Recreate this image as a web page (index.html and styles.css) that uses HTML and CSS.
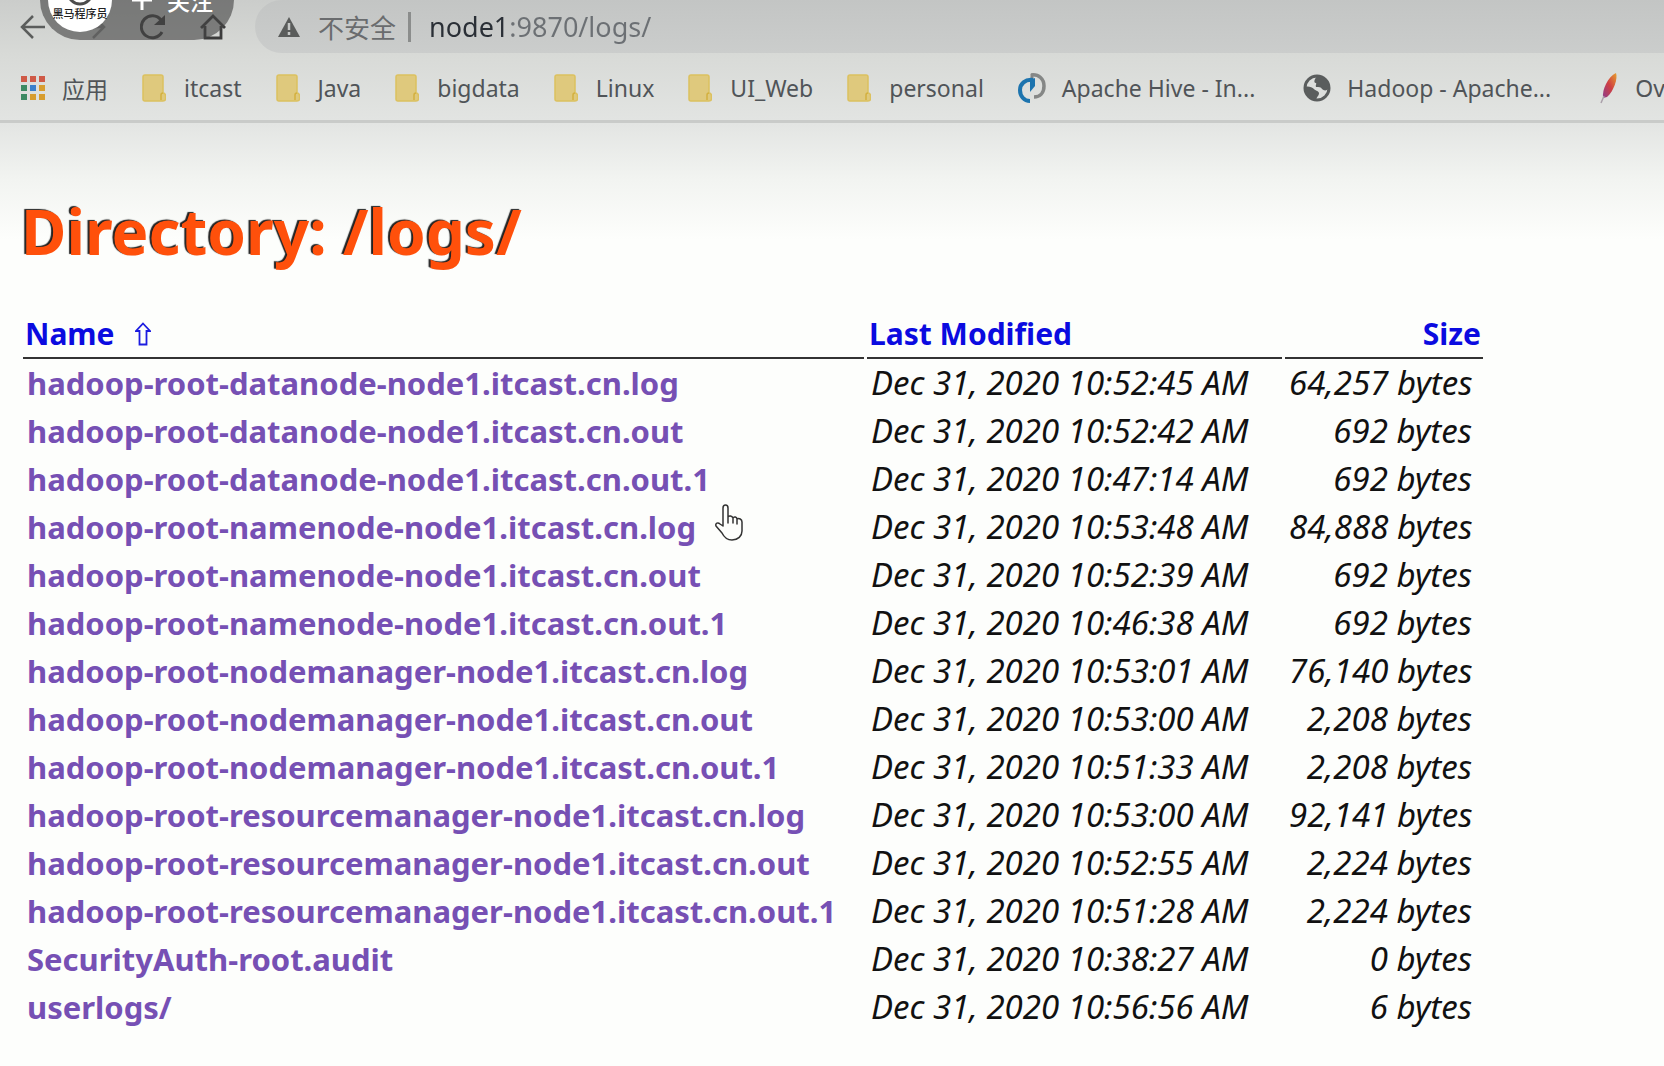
FILE: index.html
```html
<!DOCTYPE html>
<html lang="zh-CN">
<head>
<meta charset="utf-8">
<title>Directory: /logs/</title>
<link rel="stylesheet" href="styles.css">
</head>
<body>
<svg class="defs" width="0" height="0" aria-hidden="true">
  <symbol id="folder" viewBox="0 0 24 28">
    <path d="M3 1h16a2 2 0 0 1 2 2v16c2 0 2.500 1 2.500 3v3c0 1.500-1 2-2.500 2H3a2 2 0 0 1-2-2V3a2 2 0 0 1 2-2z" fill="#dfc97d" stroke="#dcc15f" stroke-width="1.500"/>
    <path d="M19 26v-5c0-1.500 1-2 2-2" fill="none" stroke="#d3b03f" stroke-width="1.500"/>
  </symbol>
</svg>

<header class="browser">
  <div class="toolbar">
    <nav class="controls" aria-label="Navigation">
      <button class="control" type="button" aria-label="Back">
        <svg width="26" height="26" viewBox="0 0 26 26"><path d="M25 13H3M13 2 2 13l11 11" fill="none" stroke="#5b5d5c" stroke-width="2.500"/></svg>
      </button>
      <button class="control" type="button" aria-label="Forward">
        <svg width="26" height="26" viewBox="0 0 26 26"><path d="M1 13h22M13 2l11 11-11 11" fill="none" stroke="#8b8d8c" stroke-width="2.500"/></svg>
      </button>
      <button class="control" type="button" aria-label="Reload">
        <svg width="26" height="26" viewBox="0 0 26 26"><path d="M21 6A11 11 0 1 0 22 18" fill="none" stroke="#3c3c3c" stroke-width="3"/><path d="M25 1v10H14z" fill="#3c3c3c"/></svg>
      </button>
      <button class="control" type="button" aria-label="Home">
        <svg width="26" height="26" viewBox="0 0 26 26"><path d="M1 14 13 2l12 12M5 12v12h16V12" fill="none" stroke="#3c3c3c" stroke-width="2.800"/></svg>
      </button>
    </nav>
    <div class="address">
      <svg width="24" height="22" viewBox="0 0 24 22"><path d="M12 1 23 21H1z" fill="#5a5c5b"/><path d="M12 7v7M12 16v3" stroke="#c6c8c7" stroke-width="2.500"/></svg>
      <label class="security" for="url">不安全</label>
      <span class="divider"></span>
      <input class="url" id="url" type="text" value="node1:9870/logs/" spellcheck="false">
    </div>
  </div>

  <nav class="bookmarks" aria-label="Bookmarks">
    <a class="bookmark apps" href="#">
      <svg width="26" height="26" viewBox="0 0 26 26">
        <path d="M1 1h6v6H1zM10 1h6v6h-6zM19 1h6v6h-6z" fill="#cf5a47"/>
        <path d="M1 10h6v6H1zM1 19h6v6H1z" fill="#3d8a63"/>
        <path d="M10 10h6v6h-6z" fill="#3a7fcb"/>
        <path d="M19 10h6v6h-6zM10 19h6v6h-6zM19 19h6v6h-6z" fill="#d79d2f"/>
      </svg>应用</a>
    <a class="bookmark" href="#"><svg width="24" height="28"><use href="#folder"/></svg>itcast</a>
    <a class="bookmark" href="#"><svg width="24" height="28"><use href="#folder"/></svg>Java</a>
    <a class="bookmark" href="#"><svg width="24" height="28"><use href="#folder"/></svg>bigdata</a>
    <a class="bookmark" href="#"><svg width="24" height="28"><use href="#folder"/></svg>Linux</a>
    <a class="bookmark" href="#"><svg width="24" height="28"><use href="#folder"/></svg>UI_Web</a>
    <a class="bookmark" href="#"><svg width="24" height="28"><use href="#folder"/></svg>personal</a>
    <a class="bookmark site" href="#">
      <svg width="28" height="30" viewBox="0 0 28 30">
        <path d="M13 2c8-1 13 4 13 11s-4 11-10 11" fill="none" stroke="#858786" stroke-width="3.500"/>
        <path d="M14 1v8" stroke="#858786" stroke-width="3"/>
        <path d="M15 7C7 6 2 11 2 17s4 11 10 11" fill="none" stroke="#1d74ae" stroke-width="4"/>
        <path d="M17 5v8l-5 6V7z" fill="#1d74ae"/>
      </svg>Apache Hive - In...</a>
    <a class="bookmark site" href="#">
      <svg width="28" height="28" viewBox="0 0 28 28">
        <circle cx="14" cy="14" r="12" fill="#dcdedc" stroke="#5a5d5d" stroke-width="3"/>
        <path d="M14 2c5 0 9 3 11 7l1 5c-2 3-5 3-7 1-1-2-3-2-6-2-1-2 1-3 0-4-2 0-2-2-1-4zM2 13c3-1 7 0 9 2 1 2 4 1 5 4 0 3-2 3-3 7C6 26 2 20 2 13z" fill="#5a5d5d"/>
      </svg>Hadoop - Apache...</a>
    <a class="bookmark site" href="#">
      <svg width="20" height="32" viewBox="0 0 20 32">
        <defs><linearGradient id="plume" x1="1" y1="0" x2="0" y2="1"><stop offset="0" stop-color="#e6a02f"/><stop offset=".5" stop-color="#cf3f42"/><stop offset="1" stop-color="#8d3c8d"/></linearGradient></defs>
        <path d="M17 1c2 5-2 18-9 24l-4 1C3 17 9 5 17 1z" fill="url(#plume)"/>
        <path d="m5 24-3 7" stroke="#aaa0aa" stroke-width="1.500"/>
      </svg>Ov</a>
  </nav>
</header>

<aside class="follow">
  <span class="avatar">
    <svg width="28" height="28" viewBox="0 0 28 28"><circle cx="14" cy="14" r="12" fill="none" stroke="#4c4c4c" stroke-width="3"/></svg>
    <span class="channel">黑马程序员</span>
  </span>
  <button class="follow-button" type="button"><svg width="20" height="20" viewBox="0 0 20 20"><path d="M10 0v20M0 10h20" stroke="#fff" stroke-width="3"/></svg>关注</button>
</aside>

<main class="listing">
  <h1 class="title">Directory: /logs/</h1>
  <table class="files">
    <colgroup><col class="col-name"><col class="col-date"><col class="col-size"></colgroup>
    <thead>
      <tr>
        <th><a href="#">Name<svg class="sort" width="16" height="24" viewBox="0 0 16 24"><path d="M8 1.500 15 9h-3.500v13.500h-7V9H1z" fill="none" stroke="#1c1ce0" stroke-width="1.800"/></svg></a></th>
        <th><a href="#">Last Modified</a></th>
        <th class="size"><a href="#">Size</a></th>
      </tr>
    </thead>
    <tbody>
      <tr><td class="name"><a href="#">hadoop-root-datanode-node1.itcast.cn.log</a></td><td class="date">Dec 31, 2020 10:52:45 AM</td><td class="size">64,257 bytes</td></tr>
      <tr><td class="name"><a href="#">hadoop-root-datanode-node1.itcast.cn.out</a></td><td class="date">Dec 31, 2020 10:52:42 AM</td><td class="size">692 bytes</td></tr>
      <tr><td class="name"><a href="#">hadoop-root-datanode-node1.itcast.cn.out.1</a></td><td class="date">Dec 31, 2020 10:47:14 AM</td><td class="size">692 bytes</td></tr>
      <tr><td class="name"><a href="#">hadoop-root-namenode-node1.itcast.cn.log</a></td><td class="date">Dec 31, 2020 10:53:48 AM</td><td class="size">84,888 bytes</td></tr>
      <tr><td class="name"><a href="#">hadoop-root-namenode-node1.itcast.cn.out</a></td><td class="date">Dec 31, 2020 10:52:39 AM</td><td class="size">692 bytes</td></tr>
      <tr><td class="name"><a href="#">hadoop-root-namenode-node1.itcast.cn.out.1</a></td><td class="date">Dec 31, 2020 10:46:38 AM</td><td class="size">692 bytes</td></tr>
      <tr><td class="name"><a href="#">hadoop-root-nodemanager-node1.itcast.cn.log</a></td><td class="date">Dec 31, 2020 10:53:01 AM</td><td class="size">76,140 bytes</td></tr>
      <tr><td class="name"><a href="#">hadoop-root-nodemanager-node1.itcast.cn.out</a></td><td class="date">Dec 31, 2020 10:53:00 AM</td><td class="size">2,208 bytes</td></tr>
      <tr><td class="name"><a href="#">hadoop-root-nodemanager-node1.itcast.cn.out.1</a></td><td class="date">Dec 31, 2020 10:51:33 AM</td><td class="size">2,208 bytes</td></tr>
      <tr><td class="name"><a href="#">hadoop-root-resourcemanager-node1.itcast.cn.log</a></td><td class="date">Dec 31, 2020 10:53:00 AM</td><td class="size">92,141 bytes</td></tr>
      <tr><td class="name"><a href="#">hadoop-root-resourcemanager-node1.itcast.cn.out</a></td><td class="date">Dec 31, 2020 10:52:55 AM</td><td class="size">2,224 bytes</td></tr>
      <tr><td class="name"><a href="#">hadoop-root-resourcemanager-node1.itcast.cn.out.1</a></td><td class="date">Dec 31, 2020 10:51:28 AM</td><td class="size">2,224 bytes</td></tr>
      <tr><td class="name"><a href="#">SecurityAuth-root.audit</a></td><td class="date">Dec 31, 2020 10:38:27 AM</td><td class="size">0 bytes</td></tr>
      <tr><td class="name"><a href="#">userlogs/</a></td><td class="date">Dec 31, 2020 10:56:56 AM</td><td class="size">6 bytes</td></tr>
    </tbody>
  </table>
</main>

<svg class="pointer" width="28" height="37" viewBox="0 0 28 37" aria-hidden="true">
  <path d="M8 22V4c0-4 5-4 5 0v9c1-2 4-1 5 1 1-2 4-1 4 1 2-1 5 0 5 3v9c0 5-4 9-10 9-5 0-8-3-10-7L1 22c-1-3 2-4 4-2zM13 13v6M18 14v5M22 15v5" fill="#fdfefc" stroke="#333" stroke-width="1.500" stroke-linejoin="round" stroke-linecap="round"/>
</svg>
</body>
</html>
```
FILE: styles.css
```css
* {
  box-sizing: border-box;
}

body {
  margin: 0;
  overflow-x: hidden;
  background: #fdfefc linear-gradient(#cbcdcb 0, #d8dad7 55px, #e2e4e2 120px, #f2f4f1 180px, #fdfefc 240px) no-repeat;
  font-family: "Noto Sans", "Noto Sans CJK SC", sans-serif;
}

a {
  color: inherit;
  text-decoration: none;
}

button {
  padding: 0;
  border: 0;
  background: none;
  font: inherit;
}

svg {
  display: block;
  flex: none;
}

.defs {
  position: absolute;
}

/* Browser chrome */

.browser {
  border-bottom: 3px solid #c9cbc9;
}

.toolbar {
  display: flex;
  height: 53px;
  padding-left: 20px;
}

.controls {
  display: flex;
  flex: none;
  gap: 34px;
  width: 235px;
}

.control {
  display: flex;
  align-items: center;
}

.address {
  display: flex;
  flex: 1;
  align-items: center;
  padding-left: 22px;
  border-radius: 27px 0 0 27px;
  background: linear-gradient(#c3c5c4, #cbcdcc);
  font-size: 27px;
}

.security {
  margin-left: 17px;
  color: #6a6c6e;
  font-size: 26px;
}

.divider {
  width: 3px;
  height: 30px;
  margin: 0 18px 0 12px;
  background: #8b8d8c;
}

.url {
  flex: 1;
  min-width: 0;
  padding: 0;
  border: 0;
  outline: 0;
  /* the host name is darker than the port and path */
  background: linear-gradient(90deg, #2a2f36 3em, #6c7074 3em);
  background-clip: text;
  color: transparent;
  font: inherit;
}

.bookmarks {
  display: flex;
  align-items: center;
  gap: 34px;
  height: 67px;
  padding: 3px 0 0 20px;
  overflow: hidden;
  color: #505458;
  font-size: 23px;
  white-space: nowrap;
}

.bookmark {
  display: flex;
  flex: none;
  align-items: center;
  gap: 18px;
}

.apps,
.site {
  gap: 16px;
}

.site + .site {
  margin-left: 14px;
}

/* Video channel badge */

.follow {
  position: absolute;
  top: -40px;
  left: 40px;
  display: flex;
  align-items: center;
  gap: 20px;
  height: 80px;
  padding: 0 21px 0 8px;
  border-radius: 40px;
  background: rgba(70, 70, 70, .62);
}

.avatar {
  display: flex;
  flex-direction: column;
  align-items: center;
  justify-content: flex-end;
  width: 64px;
  height: 64px;
  padding-bottom: 10px;
  border-radius: 50%;
  background: #fff;
}

.channel {
  color: #222;
  font-size: 11px;
  font-weight: 500;
  line-height: 16px;
}

.follow-button {
  display: flex;
  align-items: center;
  gap: 15px;
  color: #fff;
  font-size: 23px;
  font-weight: 500;
}

/* Directory listing */

.listing {
  padding: 68px 20px 32px;
}

.title {
  margin: 0 0 40px 1px;
  color: #ff500b;
  font-size: 62px;
  line-height: 80px;
  text-shadow: -2px -1px 1px #222;
}

.files {
  table-layout: fixed;
  width: 1466px;
  border-spacing: 3px 0;
  font-size: 31px;
  line-height: 48px;
  white-space: nowrap;
}

.col-name {
  width: 841px;
}

.col-date {
  width: 415px;
}

.files th,
.files td {
  height: 48px;
  padding: 0;
  text-align: left;
}

.files th {
  padding: 0 2px;
  border-bottom: 2px solid #333;
  color: #0b0be0;
  font-size: 30px;
  line-height: 46px;
}

.files th a {
  display: inline-flex;
  align-items: center;
  gap: 20px;
}

.files td {
  padding: 0 4px;
}

.files .name {
  color: #7650b4;
  font-weight: 700;
}

.files td.date,
.files td.size {
  color: #111;
  font-size: 33px;
  font-style: italic;
}

.files .size {
  text-align: right;
}

.files td.size {
  padding-right: 11px;
}

.pointer {
  position: absolute;
  top: 504px;
  left: 715px;
}
```
